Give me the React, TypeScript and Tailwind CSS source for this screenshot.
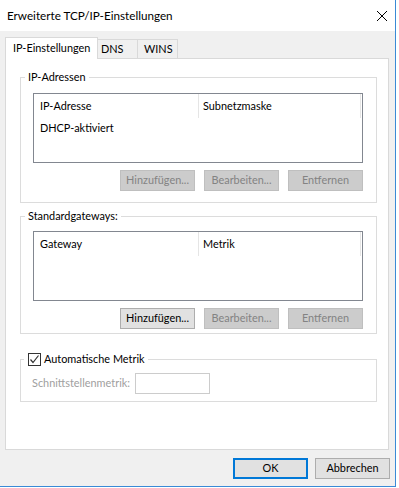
import React from "react";

const font = { fontFamily: 'Lato, "Noto Sans", sans-serif' };

function Btn({ label, disabled, primary }: { label: string; disabled?: boolean; primary?: boolean }) {
  return (
    <button
      className={`h-[21px] w-[75px] text-[10.9px] leading-none whitespace-nowrap ${
        disabled
          ? "bg-[#cccccc] border border-[#bfbfbf] text-[#838383]"
          : primary
          ? "bg-[#e1e1e1] border-2 border-[#0078d7] text-black"
          : "bg-[#e1e1e1] border border-[#adadad] text-black"
      }`}
    >
      {label}
    </button>
  );
}

function ListBox({ col1, col2, rows }: { col1: string; col2: string; rows: string[] }) {
  return (
    <div className="w-[330px] h-[70px] border border-[#828790] bg-white">
      <div className="flex h-[24px] items-center text-[10.9px]">
        <div className="w-[165px] h-full pl-[6px] flex items-center border-r border-[#e5e5e5]">{col1}</div>
        <div className="w-[162px] h-full pl-[4px] flex items-center border-r border-[#e5e5e5]">{col2}</div>
      </div>
      {rows.map((r) => (
        <div key={r} className="h-[20px] pl-[6px] flex items-center text-[10.9px]">
          {r}
        </div>
      ))}
    </div>
  );
}

function Group({
  legend,
  children,
  className,
}: {
  legend: React.ReactNode;
  children: React.ReactNode;
  className?: string;
}) {
  return (
    <fieldset className={`border border-[#dcdcdc] w-[357px] px-[12px] m-0 ${className ?? ""}`}>
      <legend className="-ml-[8px] px-[3px] text-[10.9px] leading-[16px]">{legend}</legend>
      {children}
    </fieldset>
  );
}

export default function App() {
  return (
    <div className="w-[399px] h-[488px] bg-white text-black" style={font}>
      <div className="w-[396px] h-[487px] flex flex-col border-r border-b border-[#3a8ad6] bg-[#f0f0f0]">
        {/* title bar */}
        <div className="h-[31px] bg-white flex items-center justify-between pl-[7px] pr-[8px]">
          <span className="text-[11.7px]">Erweiterte TCP/IP-Einstellungen</span>
          <svg width="10" height="10" viewBox="0 0 10 10">
            <path d="M0 0 L10 10 M10 0 L0 10" stroke="#000" strokeWidth="1" />
          </svg>
        </div>

        <div className="px-[5px] pt-[6px]">
          {/* tabs */}
          <div className="flex items-end text-[10.9px] whitespace-nowrap">
            <div className="relative z-10 -mb-px h-[22px] w-[93px] bg-white border border-b-0 border-[#d9d9d9] pl-[7px] flex items-center">
              IP-Einstellungen
            </div>
            <div className="h-[19px] w-[40px] border border-l-0 border-b-0 border-[#d9d9d9] pl-[3px] flex items-center">
              DNS
            </div>
            <div className="h-[19px] w-[40px] border border-l-0 border-b-0 border-[#d9d9d9] pl-[6px] flex items-center">
              WINS
            </div>
          </div>

          {/* panel */}
          <div className="w-[384px] h-[392px] bg-white border border-[#d9d9d9] pl-[14px] pt-[10px]">
            <Group legend="IP-Adressen" className="pb-[11px]">
              <div className="mt-[8px]">
                <ListBox col1="IP-Adresse" col2="Subnetzmaske" rows={["DHCP-aktiviert"]} />
              </div>
              <div className="w-[330px] flex justify-end gap-[9px] mt-[7px]">
                <Btn label="Hinzufügen..." disabled />
                <Btn label="Bearbeiten..." disabled />
                <Btn label="Entfernen" disabled />
              </div>
            </Group>

            <Group legend="Standardgateways:" className="mt-[5px] pb-[4px]">
              <div className="mt-[7px]">
                <ListBox col1="Gateway" col2="Metrik" rows={[]} />
              </div>
              <div className="w-[330px] flex justify-end gap-[9px] mt-[7px]">
                <Btn label="Hinzufügen..." />
                <Btn label="Bearbeiten..." disabled />
                <Btn label="Entfernen" disabled />
              </div>
            </Group>

            <Group
              className="mt-[17px] pb-[7px] !px-[11px]"
              legend={
                <span className="flex items-center gap-[3px] pl-[1px]">
                  <span className="w-[13px] h-[13px] border border-[#333] bg-white flex items-center justify-center">
                    <svg width="11" height="11" viewBox="0 0 11 11">
                      <path d="M1.5 5.5 L4 8.5 L9.5 1.5" fill="none" stroke="#333" strokeWidth="1.2" />
                    </svg>
                  </span>
                  <span>Automatische Metrik</span>
                </span>
              }
            >
              <div className="flex items-center mt-[6px] text-[10.9px] text-[#a0a0a0] whitespace-nowrap">
                <span className="w-[103px]">Schnittstellenmetrik:</span>
                <div className="w-[75px] h-[21px] border border-[#cccccc] bg-white" />
              </div>
            </Group>
          </div>
        </div>

        {/* footer buttons */}
        <div className="flex justify-end gap-[7px] pr-[5px] mt-[8px]">
          <Btn label="OK" primary />
          <Btn label="Abbrechen" />
        </div>
      </div>
    </div>
  );
}
